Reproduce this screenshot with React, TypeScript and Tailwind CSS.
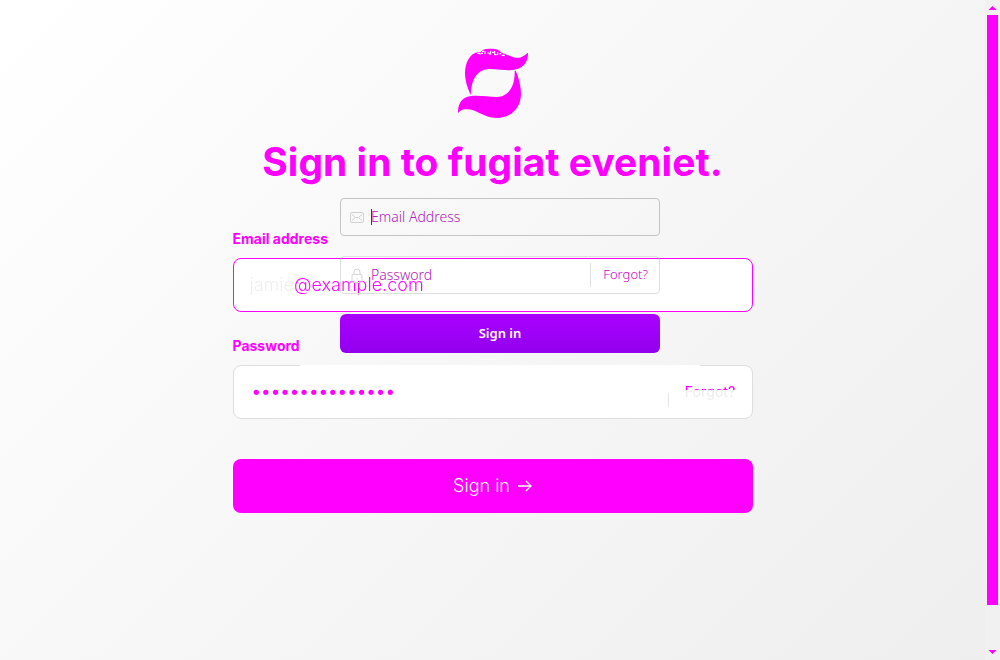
import type { InputHTMLAttributes } from "react";

function Logo() {
  return (
    <svg viewBox="54 24 210 210" className="h-[70px] w-[70px]" role="img" aria-label="Logo">
      <path
        fill="#ff00ff"
        d="M93 165C82 145 75 120 75 98C76 68 88 43 112 37L122 36C126 28 138 26 152 26C168 26 176 28 184 38C198 42 210 49 225 53C244 56 255 45 264 38C265 63 252 82 229 88C205 95 176 86 148 87C112 88 93 118 93 165Z"
      />
      <path
        fill="#ff00ff"
        d="M227 92C236 112 243 138 243 162C242 207 211 234 169 234C126 233 111 204 72 208C66 209 60 213 54 219C53 190 67 170 94 168C121 166 145 171 171 171C205 171 226 138 224 92Z"
      />
      <path
        fill="none"
        stroke="#fbfbfb"
        strokeWidth="3.5"
        d="M111 40h9v4M123 40h6M135 34v8M142 39h6v5M152 32v12M156 37h6M164 33v11h6M173 36v9M178 41h6M185 46h9M126 34h6"
      />
    </svg>
  );
}

function MailIcon() {
  return (
    <svg viewBox="0 0 14 11" className="h-[11px] w-[14px] shrink-0" fill="none" stroke="#d0d0d0" aria-hidden="true">
      <rect x=".5" y=".5" width="13" height="10" rx="1.5" />
      <path d="M2 2.5l3.5 3h3l3.5-3M2 8.5l3-2.5M12 8.5L9 6" />
    </svg>
  );
}

function LockIcon() {
  return (
    <svg viewBox="0 0 12 15" className="mx-px h-[15px] w-3 shrink-0" fill="none" stroke="#d6d6d6" aria-hidden="true">
      <rect x="1" y="6.5" width="10" height="8" rx="1" />
      <path d="M3 6.500V4a3 3 0 0 1 6 0v2.500M6 10v1.500" />
    </svg>
  );
}

function CompactInput(props: InputHTMLAttributes<HTMLInputElement>) {
  return (
    <input
      {...props}
      className="h-full w-full min-w-0 bg-transparent pb-0.5 text-sm font-light text-[#b020b8] outline-none placeholder:text-[#b020b8]"
    />
  );
}

function CompactForm() {
  return (
    <form className="flex w-80 flex-col gap-5 font-['Noto_Sans',sans-serif]">
      <div className="relative flex h-[38px] items-center gap-[7px] rounded border border-[#c4c4c4] pl-[9px]">
        <MailIcon />
        <span className="absolute left-[30px] h-4 w-px bg-[#900090]" />
        <CompactInput type="email" aria-label="Email Address" placeholder="Email Address" />
      </div>
      <div className="flex h-[38px] items-center gap-[7px] rounded border border-[#dedede] pl-[9px]">
        <LockIcon />
        <CompactInput type="password" aria-label="Password" placeholder="Password" />
        <a href="#forgot" className="flex h-6 shrink-0 items-center border-l border-[#dedede] pr-[11px] pl-3 text-[13px] font-light text-[#c800cc]">
          Forgot?
        </a>
      </div>
      <button type="button" className="h-[39px] rounded-md bg-linear-to-b from-[#aa00ff] to-[#9200ee] text-[13px] font-semibold text-white">
        Sign in
      </button>
    </form>
  );
}

function MainForm() {
  return (
    <form className="flex w-full max-w-[520px] flex-col font-[Inter,sans-serif]">
      <label htmlFor="email" className="text-sm leading-5 font-bold text-[#ff00ff]">
        Email address
      </label>
      <div className="mt-[9px] flex h-[54px] items-center rounded-lg border border-[#ff00ff] bg-white px-4">
        <input
          id="email"
          type="email"
          defaultValue="jamie@example.com"
          className="w-full bg-linear-to-r from-[#eeeeec] from-[44px] to-[#ff00ff] to-[44px] bg-clip-text text-lg font-light text-transparent outline-none"
        />
      </div>
      <label htmlFor="password" className="mt-6 text-sm leading-5 font-bold text-[#ff00ff]">
        Password
      </label>
      <div className="relative mt-[9px] flex h-[54px] items-center rounded-lg border border-[#dedede] bg-white pr-4 pl-[18px]">
        <span className="absolute -top-px right-[52px] left-[66px] h-px bg-white" />
        <input
          id="password"
          type="password"
          defaultValue="fifteen-letters"
          className="min-w-0 flex-1 bg-transparent text-[17px] text-[#ff00ff] outline-none"
        />
        <span className="mt-4 h-[14px] w-px bg-[#e4e4e4]" />
        <a
          href="#reset"
          className="ml-4 bg-linear-to-b from-[#ff00ff] from-[8px] to-[#eeeeec] to-[8px] bg-clip-text text-sm font-medium text-transparent"
        >
          Forgot?
        </a>
      </div>
      <button type="button" className="mt-10 flex h-[54px] items-center justify-center gap-2 rounded-lg bg-[#ff00ff] text-lg font-light text-white">
        Sign in
        <svg viewBox="0 0 14 12" className="h-3 w-[14px]" fill="none" stroke="white" strokeWidth="1.3" aria-hidden="true">
          <path d="M0 6h13M8 1l5 5-5 5" />
        </svg>
      </button>
    </form>
  );
}

function Scrollbar() {
  return (
    <div className="flex w-[15px] shrink-0 flex-col items-center bg-[#f1f1f1]" aria-hidden="true">
      <svg viewBox="0 0 15 15" className="h-[15px] w-[15px]" fill="#ff00ff">
        <path d="M3.500 10L7.500 6L11.500 10Z" />
      </svg>
      <div className="w-[11px] grow-[59] basis-0 bg-[#ff00ff]" />
      <div className="grow-[4] basis-0" />
      <svg viewBox="0 0 15 15" className="h-[15px] w-[15px]" fill="#ff00ff">
        <path d="M3.500 5L7.500 9L11.500 5Z" />
      </svg>
    </div>
  );
}

export default function App() {
  return (
    <div className="relative flex min-h-screen bg-linear-135 from-white to-[#eeeeee]">
      <main className="flex flex-1 flex-col items-center pt-12">
        <Logo />
        <h1 className="mt-5 mb-[43px] font-[Inter,sans-serif] text-[39px] leading-[48px] font-bold text-[#ff00ff]">
          Sign in to fugiat eveniet.
        </h1>
        <MainForm />
      </main>
      <Scrollbar />
      <div className="absolute inset-x-0 top-[198px] flex justify-center">
        <CompactForm />
      </div>
    </div>
  );
}
